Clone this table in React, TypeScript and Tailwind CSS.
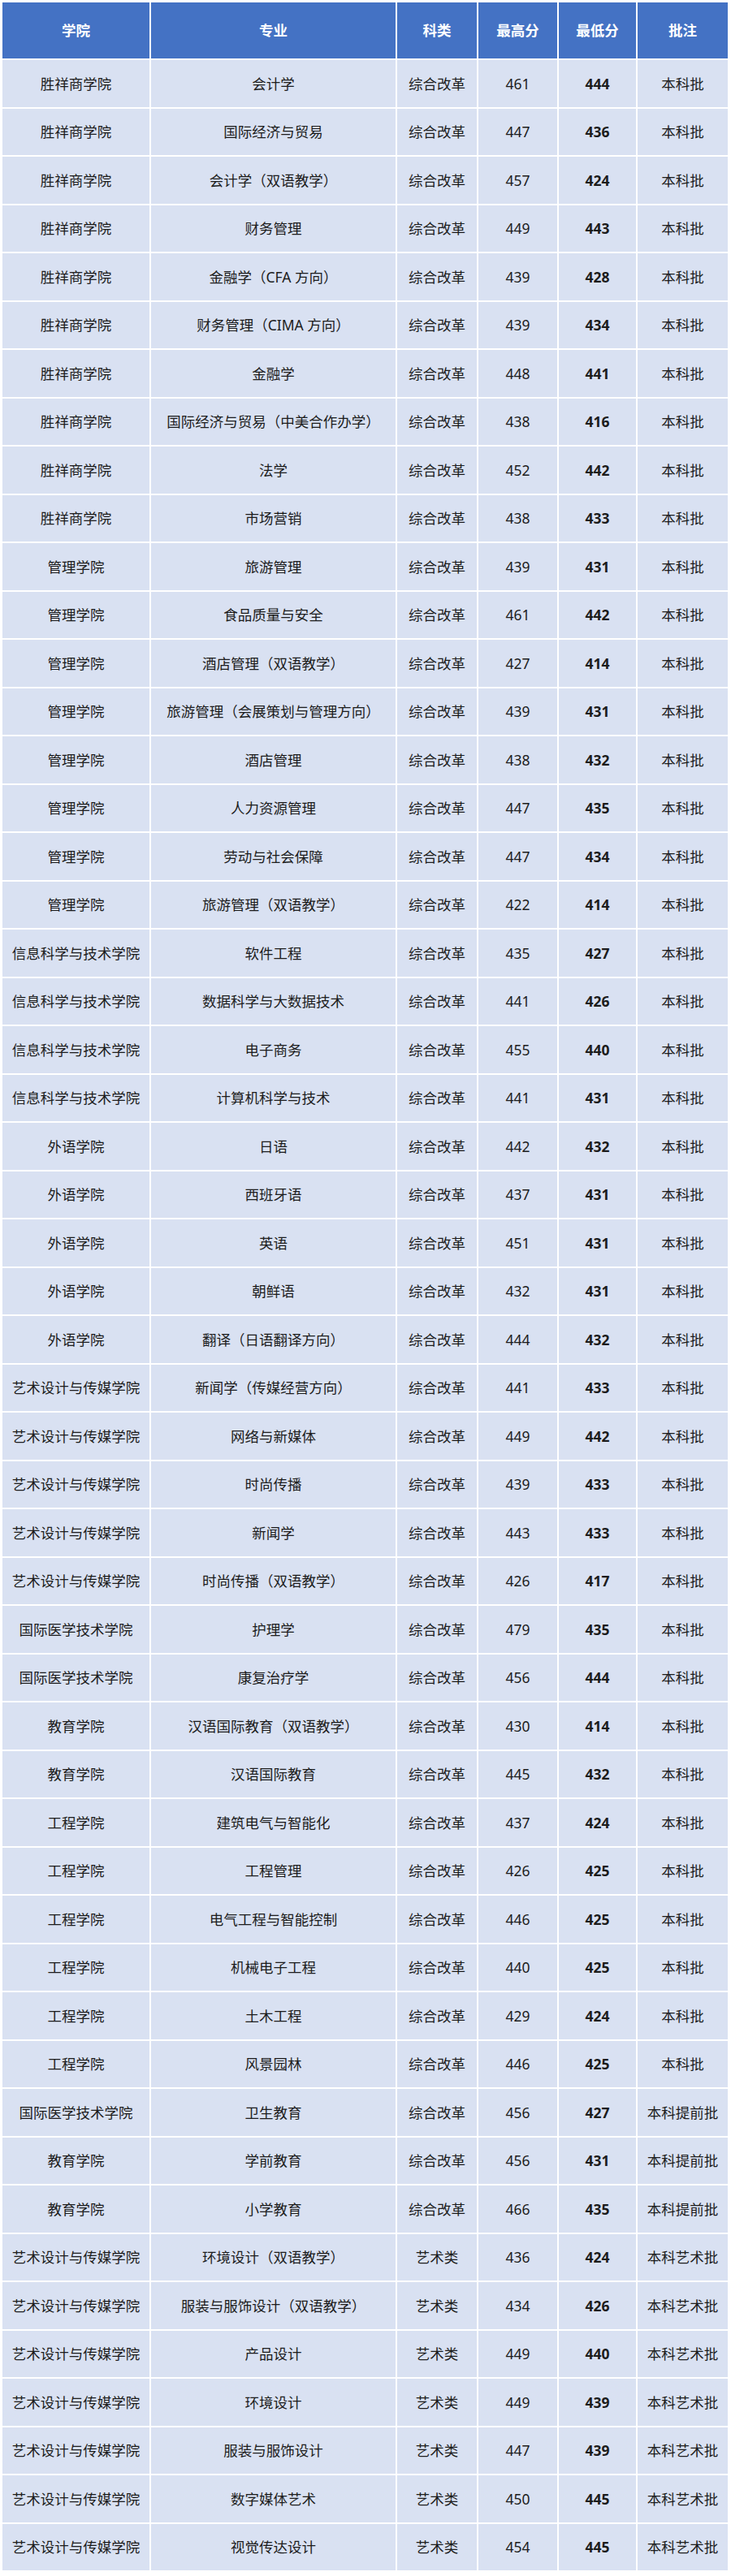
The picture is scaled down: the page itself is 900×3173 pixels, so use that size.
import React from "react";

type Row = [string, string, string, string, string, string];

const Z = "综合改革";
const Y = "艺术类";
const B = "本科批";
const T = "本科提前批";
const A = "本科艺术批";

const rows: Row[] = [
  ["胜祥商学院", "会计学", Z, "461", "444", B],
  ["胜祥商学院", "国际经济与贸易", Z, "447", "436", B],
  ["胜祥商学院", "会计学（双语教学）", Z, "457", "424", B],
  ["胜祥商学院", "财务管理", Z, "449", "443", B],
  ["胜祥商学院", "金融学（CFA 方向）", Z, "439", "428", B],
  ["胜祥商学院", "财务管理（CIMA 方向）", Z, "439", "434", B],
  ["胜祥商学院", "金融学", Z, "448", "441", B],
  ["胜祥商学院", "国际经济与贸易（中美合作办学）", Z, "438", "416", B],
  ["胜祥商学院", "法学", Z, "452", "442", B],
  ["胜祥商学院", "市场营销", Z, "438", "433", B],
  ["管理学院", "旅游管理", Z, "439", "431", B],
  ["管理学院", "食品质量与安全", Z, "461", "442", B],
  ["管理学院", "酒店管理（双语教学）", Z, "427", "414", B],
  ["管理学院", "旅游管理（会展策划与管理方向）", Z, "439", "431", B],
  ["管理学院", "酒店管理", Z, "438", "432", B],
  ["管理学院", "人力资源管理", Z, "447", "435", B],
  ["管理学院", "劳动与社会保障", Z, "447", "434", B],
  ["管理学院", "旅游管理（双语教学）", Z, "422", "414", B],
  ["信息科学与技术学院", "软件工程", Z, "435", "427", B],
  ["信息科学与技术学院", "数据科学与大数据技术", Z, "441", "426", B],
  ["信息科学与技术学院", "电子商务", Z, "455", "440", B],
  ["信息科学与技术学院", "计算机科学与技术", Z, "441", "431", B],
  ["外语学院", "日语", Z, "442", "432", B],
  ["外语学院", "西班牙语", Z, "437", "431", B],
  ["外语学院", "英语", Z, "451", "431", B],
  ["外语学院", "朝鲜语", Z, "432", "431", B],
  ["外语学院", "翻译（日语翻译方向）", Z, "444", "432", B],
  ["艺术设计与传媒学院", "新闻学（传媒经营方向）", Z, "441", "433", B],
  ["艺术设计与传媒学院", "网络与新媒体", Z, "449", "442", B],
  ["艺术设计与传媒学院", "时尚传播", Z, "439", "433", B],
  ["艺术设计与传媒学院", "新闻学", Z, "443", "433", B],
  ["艺术设计与传媒学院", "时尚传播（双语教学）", Z, "426", "417", B],
  ["国际医学技术学院", "护理学", Z, "479", "435", B],
  ["国际医学技术学院", "康复治疗学", Z, "456", "444", B],
  ["教育学院", "汉语国际教育（双语教学）", Z, "430", "414", B],
  ["教育学院", "汉语国际教育", Z, "445", "432", B],
  ["工程学院", "建筑电气与智能化", Z, "437", "424", B],
  ["工程学院", "工程管理", Z, "426", "425", B],
  ["工程学院", "电气工程与智能控制", Z, "446", "425", B],
  ["工程学院", "机械电子工程", Z, "440", "425", B],
  ["工程学院", "土木工程", Z, "429", "424", B],
  ["工程学院", "风景园林", Z, "446", "425", B],
  ["国际医学技术学院", "卫生教育", Z, "456", "427", T],
  ["教育学院", "学前教育", Z, "456", "431", T],
  ["教育学院", "小学教育", Z, "466", "435", T],
  ["艺术设计与传媒学院", "环境设计（双语教学）", Y, "436", "424", A],
  ["艺术设计与传媒学院", "服装与服饰设计（双语教学）", Y, "434", "426", A],
  ["艺术设计与传媒学院", "产品设计", Y, "449", "440", A],
  ["艺术设计与传媒学院", "环境设计", Y, "449", "439", A],
  ["艺术设计与传媒学院", "服装与服饰设计", Y, "447", "439", A],
  ["艺术设计与传媒学院", "数字媒体艺术", Y, "450", "445", A],
  ["艺术设计与传媒学院", "视觉传达设计", Y, "454", "445", A],
];

const headers = ["学院", "专业", "科类", "最高分", "最低分", "批注"];

export default function App() {
  return (
    <div
      className="min-h-[3173px] w-[900px] bg-white pl-[3px] pt-[3px]"
      style={{ fontFamily: '"Noto Sans", "Noto Sans CJK SC", sans-serif' }}
    >
      <div className="grid w-[893px] grid-cols-[181px_301px_98px_97px_95px_111px] gap-[2px] bg-white text-[17.5px] text-[#1c1c1c]">
        {headers.map((h) => (
          <div
            key={h}
            className="flex h-[69px] items-center justify-center bg-[#4472c4] font-bold text-white"
          >
            {h}
          </div>
        ))}
        {rows.map((r, i) => (
          <React.Fragment key={i}>
            {r.map((c, j) => (
              <div
                key={j}
                className={
                  "flex h-[57.5px] items-center justify-center whitespace-nowrap bg-[#d9e1f2] " +
                  (j === 4 ? "font-bold" : "font-normal")
                }
              >
                {c}
              </div>
            ))}
          </React.Fragment>
        ))}
      </div>
    </div>
  );
}
